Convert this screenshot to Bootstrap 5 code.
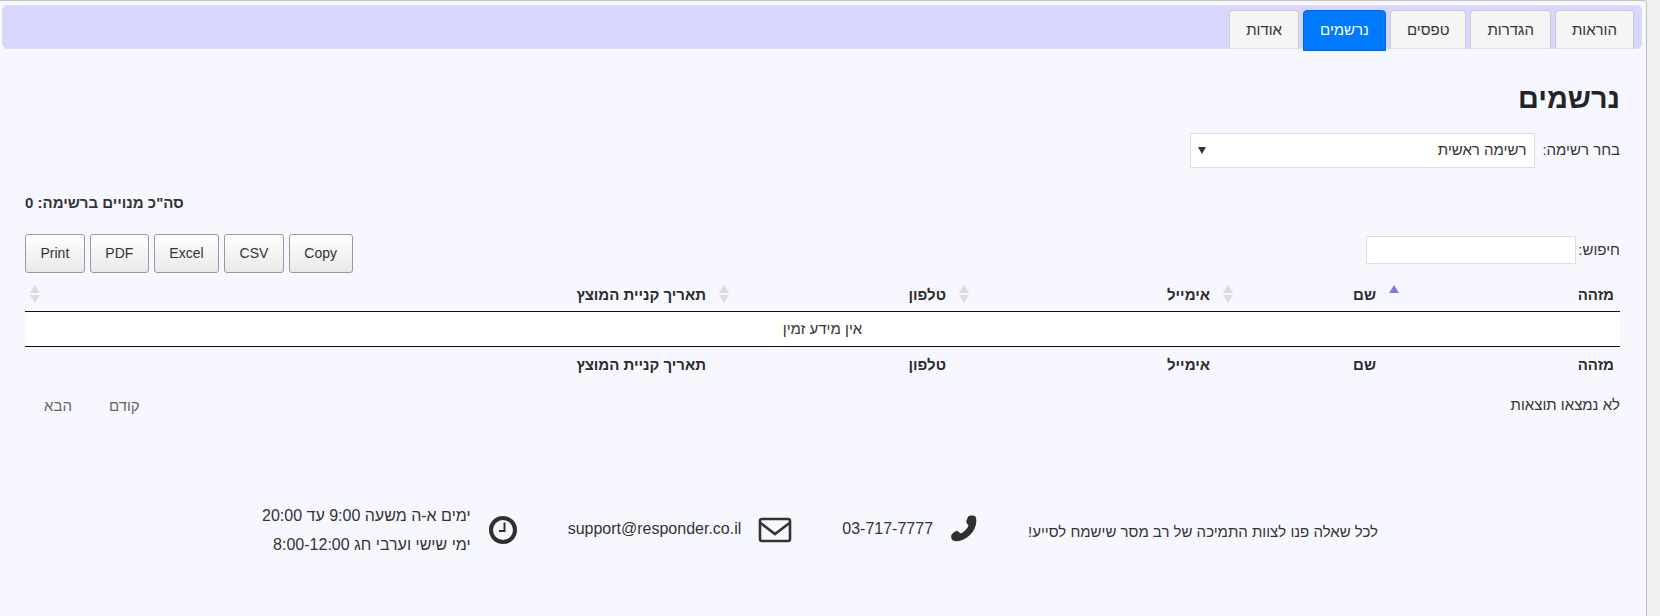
<!DOCTYPE html>
<html lang="he" dir="rtl">
<head>
  <meta charset="UTF-8" />
  <meta name="viewport" content="width=device-width, initial-scale=1" />
  <title>נרשמים</title>
  <link href="https://cdn.jsdelivr.net/npm/bootstrap@5.3.3/dist/css/bootstrap.min.css" rel="stylesheet" />
  <style>
    html, body { height: 100%; }
    body {
      background: #f1f1f1;
      font-family: "Liberation Sans", Arial, sans-serif;
      font-size: 15px;
      color: #333;
      overflow: hidden;
    }
    .shell {
      width: 1647px;
      height: 616px;
      margin-left: auto;
      margin-right: 13px;
      padding: 5px 4px 0 2px;
      background: #f7f8ff;
      border-top: 1px solid #c4c4c8;
      border-right: 1px solid #bdbdc2;
      border-top-right-radius: 4px;
    }
    .tabbar {
      height: 44px;
      padding: 4px 7px 0 0;
      margin-top: -1px;
      background: #d6d6ff;
      border: 1px solid #e0e0ea;
      border-radius: 5px;
      gap: 4px;
    }
    .tab-item {
      display: block;
      height: 39px;
      padding: 0 16px;
      line-height: 37px;
      font-size: 15px;
      color: #333;
      background: #f5f5f5;
      border: 1px solid #ccc;
      border-bottom-color: #e4e4e4;
      border-radius: 4px 4px 0 0;
      text-decoration: none;
    }
    .tab-item.current {
      height: 41px;
      color: #fff;
      background: #007bff;
      border-color: #0062ff;
    }
    .page-body { padding: 0 22px 0 23px; }
    .page-title {
      margin: 30px 0 0;
      font-size: 28.8px;
      line-height: 38px;
      font-weight: 700;
      color: #212529;
    }
    .picker-row { margin-top: 16px; height: 35px; gap: 7px; }
    .picker-row label { font-size: 15px; color: #333; }
    .list-select {
      width: 345px;
      height: 35px;
      padding: 0 8px 0 22px;
      font-size: 15px;
      color: #333;
      border: 1px solid #ddd;
      border-radius: 0;
      background-color: #fff;
      background-image: url("data:image/svg+xml,%3Csvg xmlns='http://www.w3.org/2000/svg' viewBox='0 0 8 7'%3E%3Cpath d='M0 0h8L4 7z' fill='%23333'/%3E%3C/svg%3E");
      background-position: left 7px center;
      background-size: 8px 7px;
    }
    .total-line { margin: 26px 0 0; font-size: 15px; line-height: 18px; font-weight: 700; color: #333; }
    .tools-row { margin-top: 22px; height: 39px; }
    .search-wrap { padding-top: 2px; height: 30px; gap: 2px; font-size: 15px; }
    .search-box {
      width: 210px;
      height: 28px;
      padding: 2px 6px;
      border: 1px solid #ddd;
      border-radius: 0;
      background: #fff;
    }
    .export-btns { gap: 5px; direction: ltr; }
    .export-btn {
      height: 39px;
      padding: 0 14.5px;
      font-size: 14px;
      color: #333;
      border: 1px solid #999;
      border-radius: 3px;
      background: linear-gradient(to bottom, #fff 0%, #e9e9e9 100%);
    }
    .people-table {
      width: 1595px;
      table-layout: fixed;
      border-collapse: collapse;
      color: #333;
    }
    .people-table th {
      height: 38px;
      padding: 0 8px 0 0;
      font-size: 15px;
      font-weight: 700;
      color: #2b2b2b;
      vertical-align: middle;
      text-align: right;
    }
    .people-table thead th { height: 38px; padding-top: 6px; border-bottom: 1px solid #111; }
    .people-table tfoot th { border-top: 1px solid #111; }
    .people-table th:first-child { padding-right: 6px; }
    .people-table td {
      height: 35px;
      padding: 2px 0 0;
      text-align: center;
      font-size: 15px;
      background: #fff;
    }
    .col-a { width: 236px; }
    .col-b { width: 166px; }
    .col-c { width: 264px; }
    .col-d { width: 240px; }
    .sort-mark { flex: none; margin-top: -1px; margin-left: 4px; }
    .result-row { margin-top: 12px; line-height: 18px; font-size: 15px; }
    .pager { gap: 37px; margin-left: 19px; margin-top: 1px; color: #666; }
    .help-strip {
      margin-top: 86px;
      padding-right: 264px;
      gap: 50px;
      color: #333;
    }
    .help-item { gap: 17px; }
    .help-msg { font-size: 15px; padding-top: 4px; }
    .help-txt { font-size: 16px; line-height: 29px; }
    .help-single { padding-bottom: 4px; }
    .phone-ico { margin-bottom: 4px; }
    .ltr-txt { direction: ltr; }
  </style>
</head>
<body>
  <div class="shell">
    <nav class="tabbar d-flex">
      <a class="tab-item" href="#">הוראות</a>
      <a class="tab-item" href="#">הגדרות</a>
      <a class="tab-item" href="#">טפסים</a>
      <a class="tab-item current" href="#">נרשמים</a>
      <a class="tab-item" href="#">אודות</a>
    </nav>

    <main class="page-body">
      <h1 class="page-title">נרשמים</h1>

      <div class="picker-row d-flex align-items-center">
        <label for="listPick">בחר רשימה:</label>
        <select id="listPick" class="form-select list-select">
          <option>רשימה ראשית</option>
        </select>
      </div>

      <p class="total-line text-start">סה"כ מנויים ברשימה: 0</p>

      <div class="tools-row d-flex justify-content-between align-items-start">
        <label class="search-wrap d-flex align-items-center">
          חיפוש:
          <input type="search" class="search-box" />
        </label>
        <div class="export-btns d-flex">
          <button type="button" class="btn export-btn">Print</button>
          <button type="button" class="btn export-btn">PDF</button>
          <button type="button" class="btn export-btn">Excel</button>
          <button type="button" class="btn export-btn">CSV</button>
          <button type="button" class="btn export-btn">Copy</button>
        </div>
      </div>

      <table class="people-table">
        <thead>
          <tr>
            <th class="col-a"><div class="d-flex justify-content-between align-items-center">מזהה
              <svg class="sort-mark" width="12" height="22" viewBox="0 0 12 22"><path d="M6 2l5 8H1z" fill="#7d7de0"/></svg></div></th>
            <th class="col-b"><div class="d-flex justify-content-between align-items-center">שם
              <svg class="sort-mark" width="12" height="22" viewBox="0 0 12 22"><path d="M6 2l5 8H1z" fill="#dcdce0"/><path d="M6 20l5-8H1z" fill="#dcdce0"/></svg></div></th>
            <th class="col-c"><div class="d-flex justify-content-between align-items-center">אימייל
              <svg class="sort-mark" width="12" height="22" viewBox="0 0 12 22"><path d="M6 2l5 8H1z" fill="#dcdce0"/><path d="M6 20l5-8H1z" fill="#dcdce0"/></svg></div></th>
            <th class="col-d"><div class="d-flex justify-content-between align-items-center">טלפון
              <svg class="sort-mark" width="12" height="22" viewBox="0 0 12 22"><path d="M6 2l5 8H1z" fill="#dcdce0"/><path d="M6 20l5-8H1z" fill="#dcdce0"/></svg></div></th>
            <th><div class="d-flex justify-content-between align-items-center">תאריך קניית המוצץ
              <svg class="sort-mark" width="12" height="22" viewBox="0 0 12 22"><path d="M6 2l5 8H1z" fill="#dcdce0"/><path d="M6 20l5-8H1z" fill="#dcdce0"/></svg></div></th>
          </tr>
        </thead>
        <tbody>
          <tr><td colspan="5">אין מידע זמין</td></tr>
        </tbody>
        <tfoot>
          <tr>
            <th>מזהה</th>
            <th>שם</th>
            <th>אימייל</th>
            <th>טלפון</th>
            <th>תאריך קניית המוצץ</th>
          </tr>
        </tfoot>
      </table>

      <div class="result-row d-flex justify-content-between">
        <div>לא נמצאו תוצאות</div>
        <div class="pager d-flex">
          <span>קודם</span>
          <span>הבא</span>
        </div>
      </div>
    </main>

    <footer class="help-strip d-flex align-items-center">
      <div class="help-msg">לכל שאלה פנו לצוות התמיכה של רב מסר שישמח לסייע!</div>
      <div class="help-item d-flex align-items-center">
        <svg class="phone-ico" width="28" height="27" viewBox="0 0 28 27"><path d="M18 1.5C20 0 24 0 25.5 1.5 27.5 6 26 14 20 20 15 25 8 27.5 3 25.5 1 24 .5 21 2 19l3-2.5c1.500-1 3-.5 4 .5l1.500 1.500c2.500-.5 7.500-5.500 8-8L17 8.500c-1-1.500-1-2.500 0-4z" fill="#2f2f2f"/></svg>
        <span class="help-txt help-single ltr-txt">03-717-7777</span>
      </div>
      <div class="help-item d-flex align-items-center">
        <svg width="34" height="26" viewBox="0 0 34 26"><rect x="2" y="2" width="30" height="22" rx="2" fill="none" stroke="#333" stroke-width="2.600"/><path d="M2.500 6L17 17 31.500 6" fill="none" stroke="#333" stroke-width="2.600"/></svg>
        <span class="help-txt help-single ltr-txt">support@responder.co.il</span>
      </div>
      <div class="help-item d-flex align-items-center">
        <svg width="30" height="30" viewBox="0 0 30 30"><circle cx="15" cy="15" r="12" fill="none" stroke="#2f2f2f" stroke-width="4"/><path d="M16.500 7.500V16H11" fill="none" stroke="#2f2f2f" stroke-width="2"/></svg>
        <div class="help-txt">
          <div>ימים א-ה משעה 9:00 עד 20:00</div>
          <div>ימי שישי וערבי חג 8:00-12:00</div>
        </div>
      </div>
    </footer>
  </div>

  <script src="https://cdn.jsdelivr.net/npm/bootstrap@5.3.3/dist/js/bootstrap.bundle.min.js"></script>
</body>
</html>
